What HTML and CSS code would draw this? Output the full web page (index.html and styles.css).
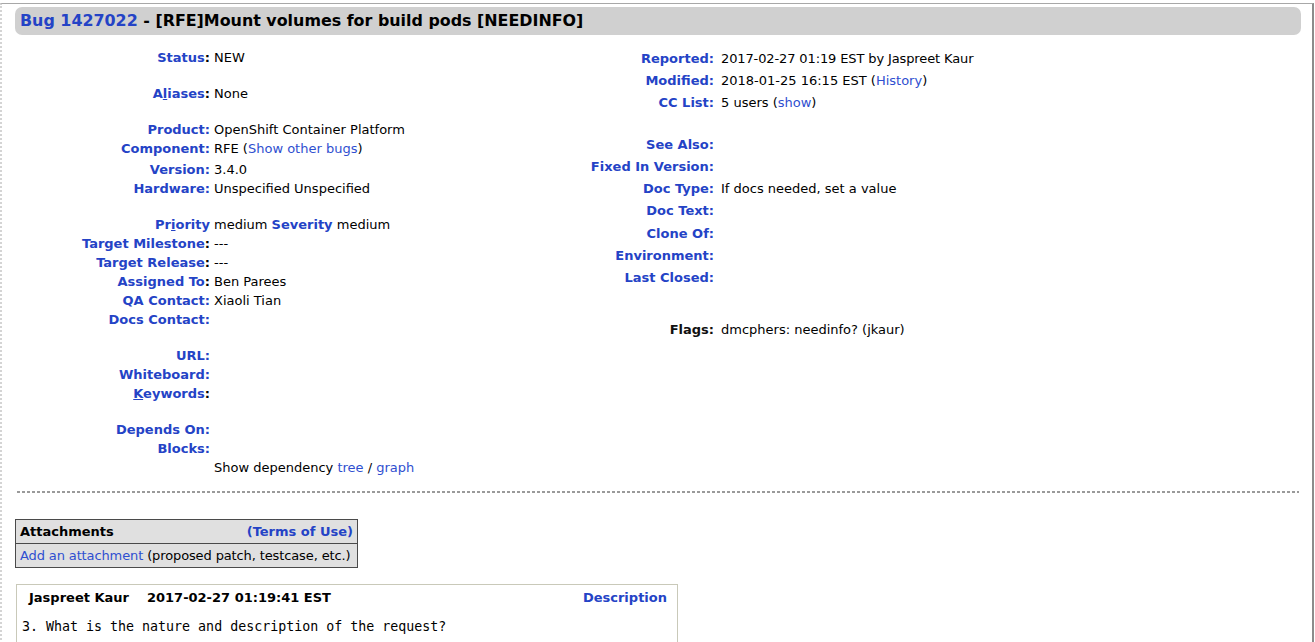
FILE: index.html
```html
<!DOCTYPE html>
<html>
<head>
<meta charset="utf-8">
<title>Bug 1427022</title>
<link rel="stylesheet" href="styles.css">
</head>
<body>
<div class="page">
  <div class="titlebar"><a class="buglink" href="#">Bug 1427022</a> - [RFE]Mount volumes for build pods [NEEDINFO]</div>

  <div class="fields">
    <div class="col col-left">
      <div class="row"><span class="lbl"><a>Status</a>:</span><span class="val">NEW</span></div>
      <div class="gap"></div>
      <div class="row"><span class="lbl"><a>A<u>l</u>iases</a>:</span><span class="val">None</span></div>
      <div class="gap"></div>
      <div class="row"><span class="lbl"><a>Product:</a></span><span class="val">OpenShift Container Platform</span></div>
      <div class="row tall"><span class="lbl"><a>Component:</a></span><span class="val">RFE (<a href="#">Show other bugs</a>)</span></div>
      <div class="row"><span class="lbl"><a>Version:</a></span><span class="val">3.4.0</span></div>
      <div class="row"><span class="lbl"><a>Hardware:</a></span><span class="val">Unspecified Unspecified</span></div>
      <div class="gap"></div>
      <div class="row"><span class="lbl"><a>Pr<u>i</u>ority</a></span><span class="val">medium <b class="lb">Severity</b> medium</span></div>
      <div class="row"><span class="lbl"><a>Target Milestone</a>:</span><span class="val">---</span></div>
      <div class="row"><span class="lbl"><a>Target Release</a>:</span><span class="val">---</span></div>
      <div class="row"><span class="lbl"><a>Assigned To</a>:</span><span class="val">Ben Parees</span></div>
      <div class="row"><span class="lbl"><a>QA Contact:</a></span><span class="val">Xiaoli Tian</span></div>
      <div class="row"><span class="lbl"><a>Docs Contact:</a></span><span class="val"></span></div>
      <div class="gap"></div>
      <div class="row"><span class="lbl"><a>URL:</a></span><span class="val"></span></div>
      <div class="row"><span class="lbl"><a>Whiteboard:</a></span><span class="val"></span></div>
      <div class="row"><span class="lbl"><a><u>K</u>eywords</a>:</span><span class="val"></span></div>
      <div class="gap"></div>
      <div class="row"><span class="lbl"><a>Depends On:</a></span><span class="val"></span></div>
      <div class="row"><span class="lbl"><a>Blocks:</a></span><span class="val"></span></div>
      <div class="row"><span class="lbl"></span><span class="val">Show dependency <a href="#">tree</a> / <a href="#">graph</a></span></div>
    </div>

    <div class="col col-right">
      <div class="rrow"><span class="lbl"><a>Reported:</a></span><span class="val tight">2017-02-27 01:19 EST by Jaspreet Kaur</span></div>
      <div class="rrow"><span class="lbl"><a>Modified:</a></span><span class="val">2018-01-25 16:15 EST (<a href="#">History</a>)</span></div>
      <div class="rrow"><span class="lbl"><a>CC List:</a></span><span class="val">5 users (<a href="#">show</a>)</span></div>
      <div class="rgap"></div>
      <div class="rrow"><span class="lbl"><a>See Also:</a></span><span class="val"></span></div>
      <div class="rrow"><span class="lbl"><a>Fixed In Version:</a></span><span class="val"></span></div>
      <div class="rrow"><span class="lbl"><a>Doc Type:</a></span><span class="val">If docs needed, set a value</span></div>
      <div class="rrow"><span class="lbl"><a>Doc Text:</a></span><span class="val"></span></div>
      <div class="rrow nudge"><span class="lbl"><a>Clone Of:</a></span><span class="val"></span></div>
      <div class="rrow"><span class="lbl"><a>Environment:</a></span><span class="val"></span></div>
      <div class="rrow"><span class="lbl"><a>Last Closed:</a></span><span class="val"></span></div>
      <div class="fgap"></div>
      <div class="rrow"><span class="lbl black">Flags:</span><span class="val">dmcphers: needinfo? (jkaur)</span></div>
    </div>
  </div>

  <div class="sep"></div>

  <table class="attach">
    <tr class="ahead"><th class="atitle">Attachments</th><th class="aterms"><a href="#">(Terms of Use)</a></th></tr>
    <tr class="abody"><td colspan="2" class="tight"><a class="plain" href="#">Add an attachment</a> (proposed patch, testcase, etc.)</td></tr>
  </table>

  <div class="comment">
    <div class="chead">
      <span class="cauthor">Jaspreet Kaur</span>
      <span class="cdate">2017-02-27 01:19:41 EST</span>
      <a class="cdesc" href="#">Description</a>
    </div>
    <pre class="ctext">3. What is the nature and description of the request?</pre>
  </div>
</div>
</body>
</html>
```

FILE: styles.css
```css
html, body {
  margin: 0;
  padding: 0;
  background: #fff;
}
body {
  font-family: "DejaVu Sans", Verdana, sans-serif;
  font-size: 13px;
  color: #000;
  overflow: hidden;
  height: 642px;
}
a {
  color: #2f4fd0;
  text-decoration: none;
}
.page {
  margin-top: 3px;
  border-top: 1px solid #a8a8a8;
  width: 1314px;
  height: 700px;
  border-left: 2px dotted #d4d4d4;
  border-right: 2px solid #8c8c8c;
  box-sizing: border-box;
}
.titlebar {
  margin: 3px 11px 0 13px;
  height: 28px;
  background: #d0d0d0;
  border-radius: 7px;
  font-weight: bold;
  font-size: 15.9px;
  line-height: 28px;
  padding-left: 5px;
  white-space: nowrap;
}
.buglink {
  color: #2443c6;
}
.fields {
  display: flex;
  margin-top: 13px;
  margin-left: 13px;
}
.col-left {
  width: 545px;
}
.col-right {
  margin-top: -1px;
}
.row, .rrow {
  display: grid;
  align-items: center;
  white-space: nowrap;
}
.row {
  grid-template-columns: 195px auto;
  column-gap: 4px;
  height: 19px;
}
.row.tall {
  height: 19px;
  margin-bottom: 2px;
}
.rrow {
  grid-template-columns: 154px auto;
  column-gap: 7px;
  height: 22px;
}
.rrow.nudge {
  margin-top: 1px;
}
.tight {
  letter-spacing: -0.12px;
}
.gap { height: 17px; }
.rgap { height: 20px; }
.fgap { height: 30px; }
.lbl {
  text-align: right;
  font-weight: bold;
}
.lbl a, .lb {
  color: #2443c6;
}
.lbl.black { color: #111; }
u {
  text-decoration: underline;
}
.sep {
  margin: 14px 13px 0 15px;
  height: 2px;
  background: repeating-linear-gradient(to right, #9a9a9a 0 3px, transparent 3px 5px);
}
.attach {
  margin: 26px 0 0 13px;
  border-collapse: collapse;
  background: #e0e0e0;
  border: 1px solid #4a4a4a;
  width: 343px;
}
.attach th, .attach td {
  height: 23px;
  padding: 0 4px;
  white-space: nowrap;
}
.ahead th {
  border-bottom: 1px solid #4a4a4a;
}
.atitle {
  text-align: left;
}
.aterms {
  text-align: right;
}
.aterms a {
  color: #2443c6;
}
.comment {
  margin: 16px 0 0 14px;
  width: 662px;
  border: 1px solid #c9c9b9;
  border-bottom: none;
  height: 80px;
  box-sizing: border-box;
}
.chead {
  display: flex;
  align-items: center;
  height: 24px;
  padding: 0 10px 0 12px;
  font-weight: bold;
}
.cauthor {
  margin-right: 18px;
}
.cdesc {
  margin-left: auto;
  color: #2443c6;
}
.ctext {
  margin: 10px 0 0 5px;
  font-family: "DejaVu Sans Mono", monospace;
  font-size: 13.3px;
}
```
